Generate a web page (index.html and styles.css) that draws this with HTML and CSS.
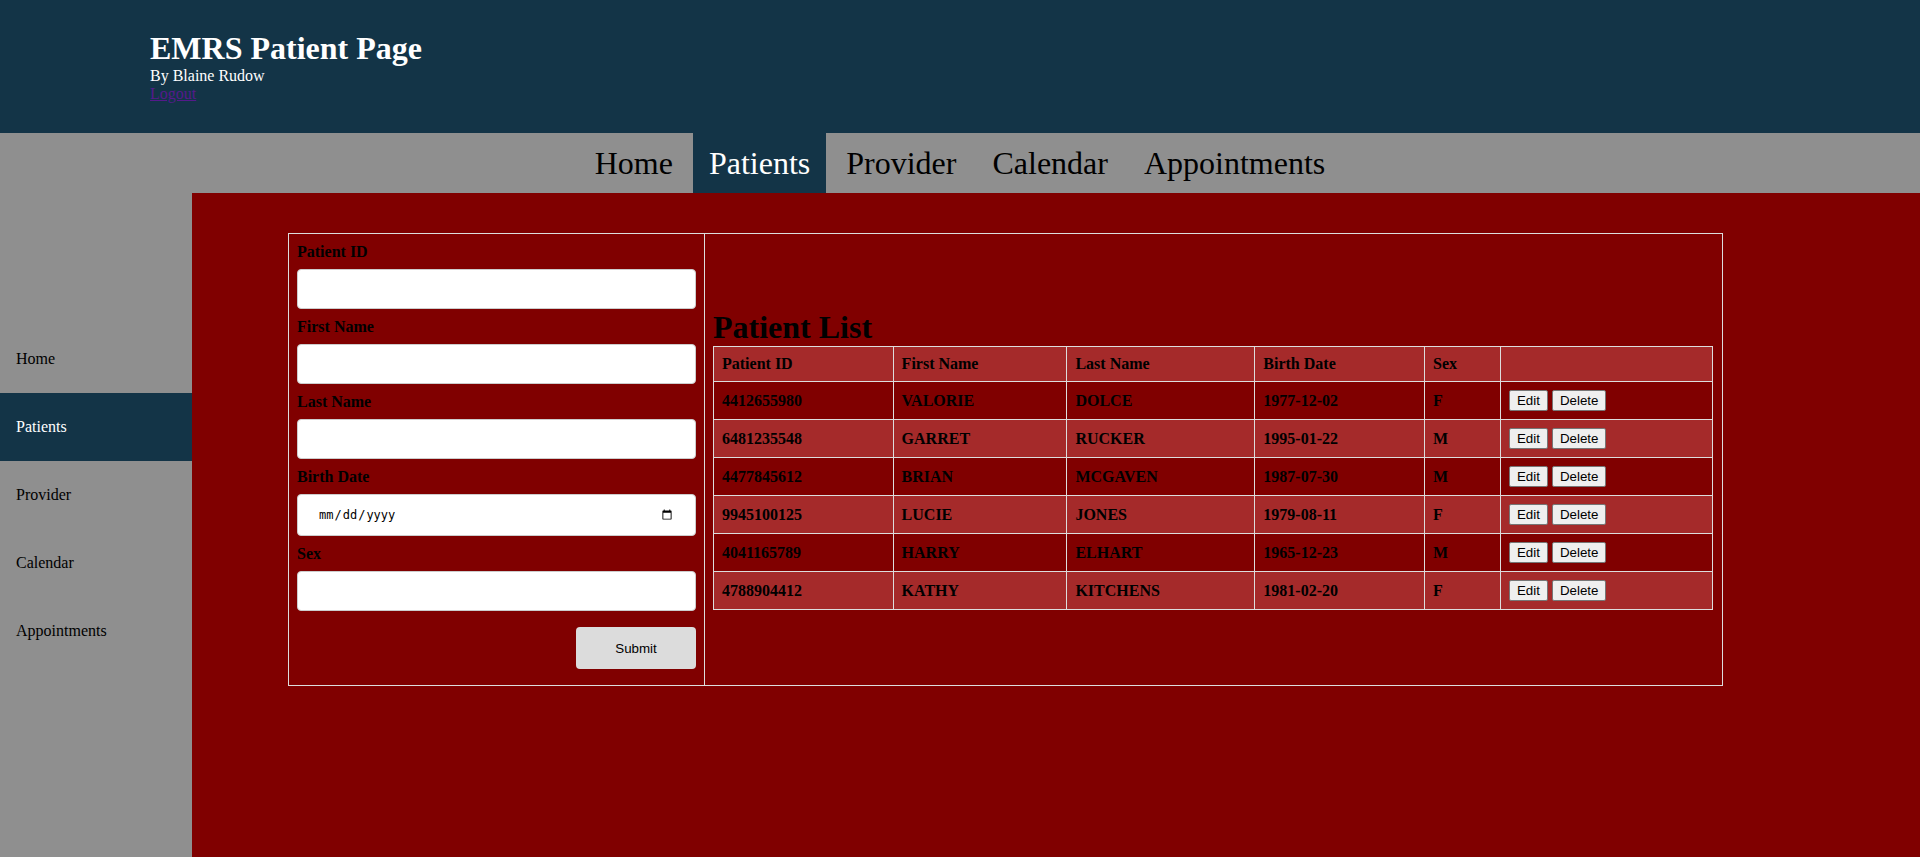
FILE: index.html
```html
<!DOCTYPE html>
<html>
<head>
<meta charset="utf-8">
<title>EMRS Patient Page</title>
<link rel="stylesheet" href="styles.css">
</head>
<body>
<header class="top">
  <h1 class="title">EMRS Patient Page</h1>
  <div class="byline">By Blaine Rudow</div>
  <a class="logout" href="#">Logout</a>
</header>
<nav class="topnav">
  <a class="topnav-item" href="#">Home</a>
  <a class="topnav-item active" href="#">Patients</a>
  <a class="topnav-item" href="#">Provider</a>
  <a class="topnav-item" href="#">Calendar</a>
  <a class="topnav-item" href="#">Appointments</a>
</nav>
<div class="layout">
  <aside class="sidebar">
    <a class="side-item" href="#">Home</a>
    <a class="side-item active" href="#">Patients</a>
    <a class="side-item" href="#">Provider</a>
    <a class="side-item" href="#">Calendar</a>
    <a class="side-item" href="#">Appointments</a>
  </aside>
  <main class="main">
    <div class="panel">
      <form class="form-col">
        <label class="field-label">Patient ID</label>
        <input class="field" type="text">
        <label class="field-label">First Name</label>
        <input class="field" type="text">
        <label class="field-label">Last Name</label>
        <input class="field" type="text">
        <label class="field-label">Birth Date</label>
        <input class="field field-date" type="date">
        <label class="field-label">Sex</label>
        <input class="field" type="text">
        <div class="submit-row"><button class="submit" type="button">Submit</button></div>
      </form>
      <section class="list-col">
        <h1 class="list-title">Patient List</h1>
        <table class="ptable">
          <thead>
            <tr><th>Patient ID</th><th>First Name</th><th>Last Name</th><th>Birth Date</th><th>Sex</th><th></th></tr>
          </thead>
          <tbody>
            <tr><td>4412655980</td><td>VALORIE</td><td>DOLCE</td><td>1977-12-02</td><td>F</td><td><button class="rbtn">Edit</button> <button class="rbtn">Delete</button></td></tr>
            <tr><td>6481235548</td><td>GARRET</td><td>RUCKER</td><td>1995-01-22</td><td>M</td><td><button class="rbtn">Edit</button> <button class="rbtn">Delete</button></td></tr>
            <tr><td>4477845612</td><td>BRIAN</td><td>MCGAVEN</td><td>1987-07-30</td><td>M</td><td><button class="rbtn">Edit</button> <button class="rbtn">Delete</button></td></tr>
            <tr><td>9945100125</td><td>LUCIE</td><td>JONES</td><td>1979-08-11</td><td>F</td><td><button class="rbtn">Edit</button> <button class="rbtn">Delete</button></td></tr>
            <tr><td>4041165789</td><td>HARRY</td><td>ELHART</td><td>1965-12-23</td><td>M</td><td><button class="rbtn">Edit</button> <button class="rbtn">Delete</button></td></tr>
            <tr><td>4788904412</td><td>KATHY</td><td>KITCHENS</td><td>1981-02-20</td><td>F</td><td><button class="rbtn">Edit</button> <button class="rbtn">Delete</button></td></tr>
          </tbody>
        </table>
      </section>
    </div>
  </main>
</div>
</body>
</html>
```
FILE: styles.css
```css
html, body {
  margin: 0;
  padding: 0;
  height: 100%;
}
body {
  font-family: "Liberation Serif", "Times New Roman", serif;
  font-size: 16px;
  display: flex;
  flex-direction: column;
  background: #800000;
}
.top {
  background: #133447;
  color: #ffffff;
  padding: 30px 0 30px 150px;
  line-height: normal;
}
.title {
  margin: 0;
  font-size: 32px;
  font-weight: bold;
}
.byline {
  font-size: 16px;
}
.logout {
  color: #551a8b;
  font-size: 16px;
}
.topnav {
  background: #8f8f8f;
  height: 60px;
  display: flex;
  justify-content: center;
  gap: 4px;
}
.topnav-item {
  display: block;
  padding: 0 16px;
  font-size: 32px;
  line-height: 60px;
  color: #000000;
  text-decoration: none;
}
.topnav-item.active {
  background: #133447;
  color: #ffffff;
}
.layout {
  flex: 1;
  display: flex;
}
.sidebar {
  width: 192px;
  flex: 0 0 192px;
  background: #8f8f8f;
  padding-top: 132px;
  box-sizing: border-box;
}
.side-item {
  display: block;
  height: 68px;
  line-height: 68px;
  padding-left: 16px;
  color: #000000;
  text-decoration: none;
  font-size: 16px;
}
.side-item.active {
  background: #133447;
  color: #ffffff;
}
.main {
  flex: 1;
  background: #800000;
  padding: 40px 0 0 96px;
}
.panel {
  display: grid;
  grid-template-columns: 416px 1016px;
  width: 1433px;
  border: 1px solid #dddddd;
}
.form-col {
  padding: 8px;
  border-right: 1px solid #dddddd;
  margin: 0;
}
.field-label {
  display: block;
  font-weight: bold;
  font-size: 16px;
  line-height: 19px;
  color: #000000;
}
.field {
  display: block;
  width: 100%;
  height: 40px;
  margin: 8px 0;
  padding: 12px 20px;
  border: 1px solid #cccccc;
  border-radius: 4px;
  box-sizing: border-box;
  background: #ffffff;
  font-family: "Liberation Sans", Arial, sans-serif;
  font-size: 13.333px;
}
.field-date {
  height: 42px;
  font-family: "DejaVu Sans Mono", monospace;
  font-size: 12px;
}
.submit-row {
  display: flex;
  justify-content: flex-end;
}
.submit {
  width: 120px;
  height: 42px;
  margin: 8px 0;
  border: none;
  border-radius: 4px;
  background: #dcdcdc;
  color: #000000;
  font-family: "Liberation Sans", Arial, sans-serif;
  font-size: 13.333px;
}
.list-col {
  padding: 8px;
  display: flex;
  flex-direction: column;
  justify-content: center;
}
.list-title {
  margin: 0;
  font-size: 32px;
  font-weight: bold;
  color: #000000;
}
.ptable {
  width: 100%;
  border-collapse: collapse;
  font-weight: bold;
  color: #000000;
}
.ptable th, .ptable td {
  border: 1px solid #dddddd;
  padding: 8px;
  text-align: left;
  font-size: 16px;
  font-weight: bold;
  height: 21px;
  box-sizing: content-box;
}
.ptable thead th {
  height: auto;
}
.ptable thead tr {
  background: #a52a2a;
}
.ptable tbody tr:nth-child(odd) {
  background: #800000;
}
.ptable tbody tr:nth-child(even) {
  background: #a52a2a;
}
.rbtn {
  font-family: "Liberation Sans", Arial, sans-serif;
  font-size: 13.333px;
  line-height: 15px;
  height: 21px;
  padding: 2px 7px;
  background: #efefef;
  border: 1px solid #767676;
  border-radius: 2px;
  color: #000000;
  vertical-align: middle;
}
```
